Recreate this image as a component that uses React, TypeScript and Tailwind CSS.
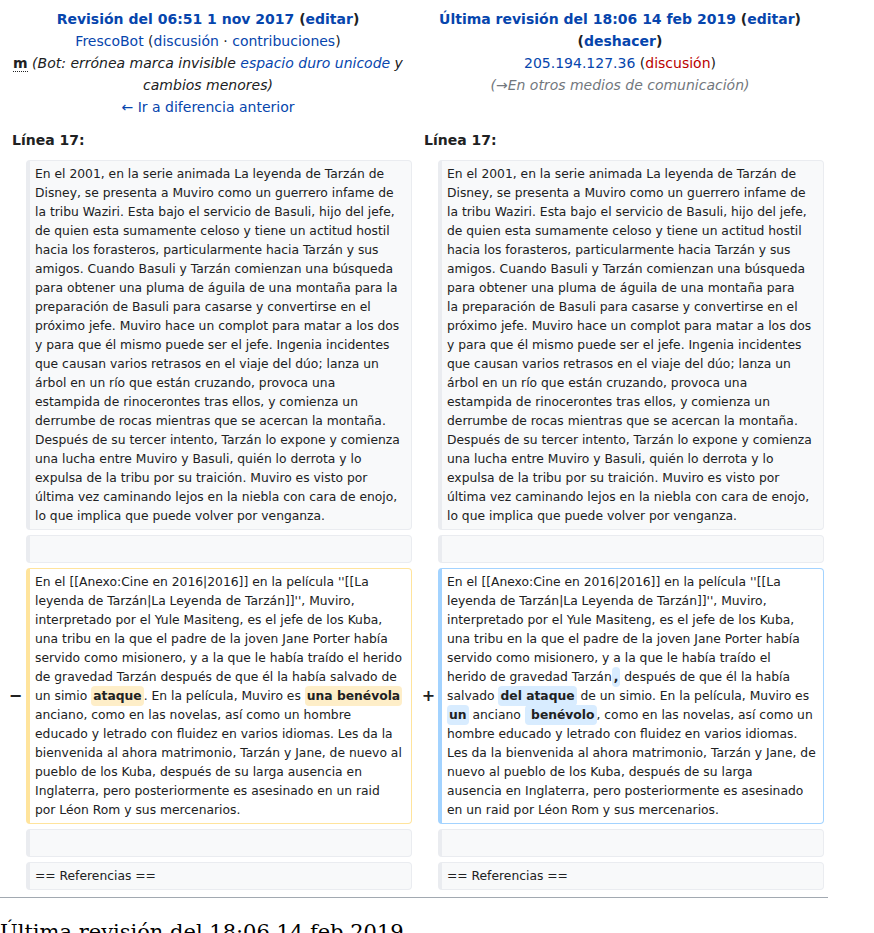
import React from "react";

const LINK = "text-[#0645ad]";

const ctxLeft = [
  "En el 2001, en la serie animada La leyenda de Tarzán de",
  "Disney, se presenta a Muviro como un guerrero infame de",
  "la tribu Waziri. Esta bajo el servicio de Basuli, hijo del jefe,",
  "de quien esta sumamente celoso y tiene un actitud hostil",
  "hacia los forasteros, particularmente hacia Tarzán y sus",
  "amigos. Cuando Basuli y Tarzán comienzan una búsqueda",
  "para obtener una pluma de águila de una montaña para la",
  "preparación de Basuli para casarse y convertirse en el",
  "próximo jefe. Muviro hace un complot para matar a los dos",
  "y para que él mismo puede ser el jefe. Ingenia incidentes",
  "que causan varios retrasos en el viaje del dúo; lanza un",
  "árbol en un río que están cruzando, provoca una",
  "estampida de rinocerontes tras ellos, y comienza un",
  "derrumbe de rocas mientras que se acercan la montaña.",
  "Después de su tercer intento, Tarzán lo expone y comienza",
  "una lucha entre Muviro y Basuli, quién lo derrota y lo",
  "expulsa de la tribu por su traición. Muviro es visto por",
  "última vez caminando lejos en la niebla con cara de enojo,",
  "lo que implica que puede volver por venganza.",
];

const ctxRight = [
  "En el 2001, en la serie animada La leyenda de Tarzán de",
  "Disney, se presenta a Muviro como un guerrero infame de",
  "la tribu Waziri. Esta bajo el servicio de Basuli, hijo del jefe,",
  "de quien esta sumamente celoso y tiene un actitud hostil",
  "hacia los forasteros, particularmente hacia Tarzán y sus",
  "amigos. Cuando Basuli y Tarzán comienzan una búsqueda",
  "para obtener una pluma de águila de una montaña para",
  "la preparación de Basuli para casarse y convertirse en el",
  "próximo jefe. Muviro hace un complot para matar a los dos",
  "y para que él mismo puede ser el jefe. Ingenia incidentes",
  "que causan varios retrasos en el viaje del dúo; lanza un",
  "árbol en un río que están cruzando, provoca una",
  "estampida de rinocerontes tras ellos, y comienza un",
  "derrumbe de rocas mientras que se acercan la montaña.",
  "Después de su tercer intento, Tarzán lo expone y comienza",
  "una lucha entre Muviro y Basuli, quién lo derrota y lo",
  "expulsa de la tribu por su traición. Muviro es visto por",
  "última vez caminando lejos en la niebla con cara de enojo,",
  "lo que implica que puede volver por venganza.",
];

function Del({ children }: { children: React.ReactNode }) {
  return (
    <del className="no-underline font-bold bg-[#feeec8] rounded-[4px] px-[2px] py-[3px]">
      {children}
    </del>
  );
}

function Ins({ children }: { children: React.ReactNode }) {
  return (
    <ins className="no-underline font-bold bg-[#d8ecff] rounded-[4px] px-[2px] py-[3px]">
      {children}
    </ins>
  );
}

const delLines: React.ReactNode[] = [
  "En el [[Anexo:Cine en 2016|2016]] en la película ''[[La",
  "leyenda de Tarzán|La Leyenda de Tarzán]]'', Muviro,",
  "interpretado por el Yule Masiteng, es el jefe de los Kuba,",
  "una tribu en la que el padre de la joven Jane Porter había",
  "servido como misionero, y a la que le había traído el herido",
  "de gravedad Tarzán después de que él la había salvado de",
  <>
    un simio <Del>ataque</Del>. En la película, Muviro es <Del>una benévola</Del>
  </>,
  "anciano, como en las novelas, así como un hombre",
  "educado y letrado con fluidez en varios idiomas. Les da la",
  "bienvenida al ahora matrimonio, Tarzán y Jane, de nuevo al",
  "pueblo de los Kuba, después de su larga ausencia en",
  "Inglaterra, pero posteriormente es asesinado en un raid",
  "por Léon Rom y sus mercenarios.",
];

const insLines: React.ReactNode[] = [
  "En el [[Anexo:Cine en 2016|2016]] en la película ''[[La",
  "leyenda de Tarzán|La Leyenda de Tarzán]]'', Muviro,",
  "interpretado por el Yule Masiteng, es el jefe de los Kuba,",
  "una tribu en la que el padre de la joven Jane Porter había",
  "servido como misionero, y a la que le había traído el",
  <>
    herido de gravedad Tarzán<Ins>,</Ins> después de que él la había
  </>,
  <>
    salvado <Ins>del ataque</Ins> de un simio. En la película, Muviro es
  </>,
  <>
    <Ins>un</Ins> anciano <Ins>{" benévolo"}</Ins>, como en las novelas, así como un
  </>,
  "hombre educado y letrado con fluidez en varios idiomas.",
  "Les da la bienvenida al ahora matrimonio, Tarzán y Jane, de",
  "nuevo al pueblo de los Kuba, después de su larga",
  "ausencia en Inglaterra, pero posteriormente es asesinado",
  "en un raid por Léon Rom y sus mercenarios.",
];

type Kind = "ctx" | "del" | "ins";

function Box({ kind, lines }: { kind: Kind; lines: React.ReactNode[] }) {
  const style =
    kind === "ctx"
      ? "bg-[#f8f9fa] border-[#eaecf0]"
      : kind === "del"
      ? "bg-white border-[#ffe49c]"
      : "bg-white border-[#a3d3ff]";
  return (
    <div
      className={`${style} border border-l-4 rounded-[4px] pl-[5px] pr-[4px] pt-[4px] pb-[3px] text-[12.32px] leading-[19px] text-[#202122]`}
    >
      {lines.map((l, i) => (
        <div key={i} className="whitespace-pre">
          {l}
        </div>
      ))}
    </div>
  );
}

function Marker({ ch, cls }: { ch: string; cls: string }) {
  return (
    <div className={`flex items-center justify-center font-bold text-[16px] leading-none text-[#202122] ${cls}`}>
      {ch}
    </div>
  );
}

export default function App() {
  return (
    <div className="w-[874px] bg-white font-['DejaVu_Sans',sans-serif] text-[#202122]">
      <div className="w-[828px]">
        <div className="px-[4px] pt-[4px] grid grid-cols-[18px_386px_18px_386px] gap-x-[4px] gap-y-[5px]">
          {/* Headers */}
          <div className="col-span-2 text-center text-[14px] leading-[22px] pt-[4px] pb-[1px]">
            <div className="font-bold">
              <a className={LINK}>Revisión del 06:51 1 nov 2017</a> (<a className={LINK}>editar</a>)
            </div>
            <div>
              <a className={LINK}>FrescoBot</a> (<a className={LINK}>discusión</a> ·{" "}
              <a className={LINK}>contribuciones</a>)
            </div>
            <div>
              <abbr className="font-bold no-underline border-b border-dotted border-[#202122]">m</abbr>{" "}
              <span className="italic">
                (Bot: errónea marca invisible <a className={LINK}>espacio duro unicode</a> y cambios
                menores)
              </span>
            </div>
            <div>
              <a className={LINK}>← Ir a diferencia anterior</a>
            </div>
          </div>
          <div className="col-span-2 text-center text-[14px] leading-[22px] pt-[4px] pb-[1px]">
            <div className="font-bold">
              <a className={LINK}>Última revisión del 18:06 14 feb 2019</a> (<a className={LINK}>editar</a>){" "}
              (<a className={LINK}>deshacer</a>)
            </div>
            <div>
              <a className={LINK}>205.194.127.36</a> (<a className="text-[#ba0000]">discusión</a>)
            </div>
            <div className="italic text-[#72777d]">(→En otros medios de comunicación)</div>
          </div>

          {/* Line numbers */}
          <div className="col-span-2 h-[31px] flex items-center pt-[2px] pl-[8px] font-bold text-[14px]">Línea 17:</div>
          <div className="col-span-2 h-[31px] flex items-center pt-[2px] pl-[8px] font-bold text-[14px]">Línea 17:</div>

          {/* Context */}
          <div />
          <Box kind="ctx" lines={ctxLeft} />
          <div />
          <Box kind="ctx" lines={ctxRight} />

          <div />
          <Box kind="ctx" lines={["\u00a0"]} />
          <div />
          <Box kind="ctx" lines={["\u00a0"]} />

          {/* Changed */}
          <Marker ch="−" cls="pl-[5px]" />
          <Box kind="del" lines={delLines} />
          <Marker ch="+" cls="pl-[7px]" />
          <Box kind="ins" lines={insLines} />

          <div />
          <Box kind="ctx" lines={["\u00a0"]} />
          <div />
          <Box kind="ctx" lines={["\u00a0"]} />

          <div />
          <Box kind="ctx" lines={["== Referencias =="]} />
          <div />
          <Box kind="ctx" lines={["== Referencias =="]} />
        </div>
        <div className="mt-[7px] h-px bg-[#a2a9b1]" />
      </div>
      <h2 className="mt-[22px] font-['DejaVu_Serif',serif] text-[21px] leading-[24px] text-black">
        Última revisión del 18:06 14 feb 2019
      </h2>
    </div>
  );
}
